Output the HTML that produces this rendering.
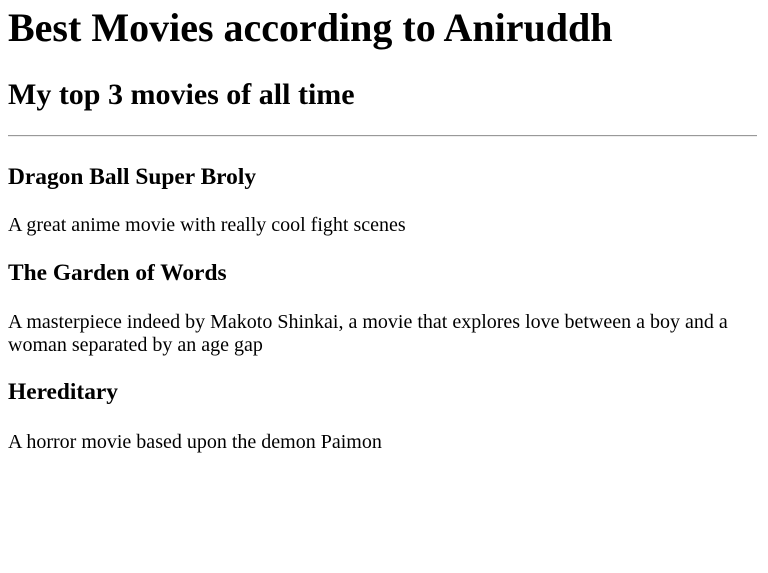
<!DOCTYPE html>
<html>
<head>
<meta charset="utf-8">
<style>
body { margin: 0; font-family: "Liberation Serif", serif; color: #000; background: #fff; }
.e { position: absolute; left: 8px; margin: 0; width: 750px; }
h1 { font-size: 40px; line-height: 46px; font-weight: bold; }
h2 { font-size: 30px; line-height: 34.5px; font-weight: bold; }
h3 { font-size: 23.4px; line-height: 27px; font-weight: bold; }
p { font-size: 20px; line-height: 23px; }
hr { position: absolute; left: 8px; top: 135px; width: 749px; margin: 0; border: 0; border-top: 1px solid #999; border-bottom: 1px solid #eee; height: 0; }
</style>
</head>
<body>
<h1 class="e" style="top:5px">Best Movies according to Aniruddh</h1>
<h2 class="e" style="top:78px">My top 3 movies of all time</h2>
<hr>
<h3 class="e" style="top:164px">Dragon Ball Super Broly</h3>
<p class="e" style="top:214px">A great anime movie with really cool fight scenes</p>
<h3 class="e" style="top:260px">The Garden of Words</h3>
<p class="e" style="top:311px">A masterpiece indeed by Makoto Shinkai, a movie that explores love between a boy and a woman separated by an age gap</p>
<h3 class="e" style="top:379px">Hereditary</h3>
<p class="e" style="top:431px">A horror movie based upon the demon Paimon</p>
</body>
</html>
